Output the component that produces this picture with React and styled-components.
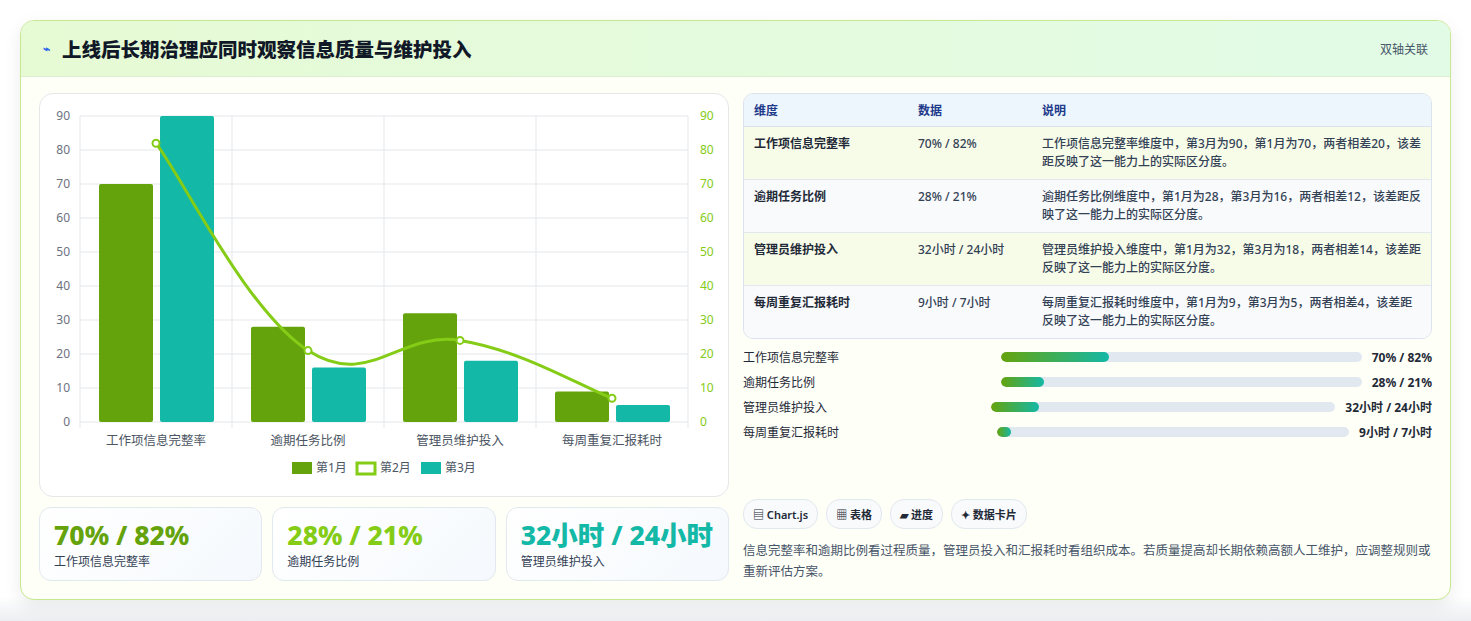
import React from 'react';
import styled, { createGlobalStyle } from 'styled-components';

const Global = createGlobalStyle`
  body { margin: 0; background: #f3f4f6; font-family: "Noto Sans", "Noto Sans CJK SC", sans-serif; }
`;

const Page = styled.div`
  padding: 20px 20px 20px 20px;
  height: 621px;
  box-sizing: border-box;
  background: linear-gradient(#fff, #fff 96%, #eceef1);
`;

const Panel = styled.div`
  border: 1px solid #c6e88f;
  border-radius: 14px;
  background: #fefff7;
  box-shadow: 0 6px 18px rgba(0,0,0,0.08);
  overflow: hidden;
  height: 580px;
  box-sizing: border-box;
`;

const Header = styled.div`
  height: 55px;
  display: flex;
  align-items: center;
  justify-content: space-between;
  padding: 0 22px;
  background: linear-gradient(90deg, #e6fad4, #e2fbe6);
  border-bottom: 1px solid #dbeed0;
`;

const Title = styled.h1`
  margin: 0;
  font-size: 19.5px;
  font-weight: 800;
  color: #111827;
  display: flex;
  align-items: center;
  gap: 12px;
`;

const HeaderTag = styled.span`
  font-size: 12px;
  color: #475569;
`;

const Body = styled.div`
  display: grid;
  grid-template-columns: 690px 1fr;
  gap: 14px;
  padding: 16px 18px 0 18px;
`;

const LeftCol = styled.div`
  display: flex;
  flex-direction: column;
  gap: 10px;
`;

const ChartBox = styled.div`
  height: 404px;
  border: 1px solid #e5e7eb;
  border-radius: 14px;
  background: #fff;
  box-sizing: border-box;
`;

const Cards = styled.div`
  display: grid;
  grid-template-columns: repeat(3, 1fr);
  gap: 10px;
`;

const Card = styled.div`
  height: 74px;
  box-sizing: border-box;
  border: 1px solid #e2e8f0;
  border-radius: 12px;
  background: linear-gradient(135deg, #fff, #f5f9fd);
  padding: 10px 14px;
`;

const CardValue = styled.div`
  font-size: 26.5px;
  font-weight: 800;
  color: ${p => p.color};
  line-height: 34px;
`;

const CardLabel = styled.div`
  font-size: 12px;
  color: #334155;
`;

const RightCol = styled.div`
  display: flex;
  flex-direction: column;
`;

const Table = styled.table`
  width: 100%;
  border-collapse: separate;
  border-spacing: 0;
  border: 1px solid #dbe3ee;
  border-radius: 10px;
  overflow: hidden;
  font-size: 12px;
`;

const Th = styled.th`
  text-align: left;
  font-weight: 700;
  color: #1e3a8a;
  background: #edf5fd;
  padding: 0 10px;
  height: 32px;
  border-bottom: 1px solid #dbe3ee;
  width: ${p => p.w || 'auto'};
`;

const Tr = styled.tr`
  background: ${p => (p.alt ? '#f8fafc' : '#f7fce9')};
  td { border-bottom: ${p => (p.last ? 'none' : '1px solid #e2e8f0')}; }
`;

const Td = styled.td`
  padding: 8px 10px;
  height: 36px;
  vertical-align: top;
  color: ${p => (p.strong ? '#1f2937' : '#334155')};
  font-weight: ${p => (p.strong ? 600 : 500)};
  line-height: 18px;
`;

const Bars = styled.div`
  display: flex;
  flex-direction: column;
  gap: 7px;
  margin-top: 9px;
`;

const BarRow = styled.div`
  display: flex;
  align-items: center;
  height: 18px;
  font-size: 12px;
  color: #1f2937;
`;

const BarLabel = styled.span`
  flex: 0 0 auto;
  width: ${p => p.w}px;
`;

const Track = styled.div`
  flex: 1;
  height: 10px;
  border-radius: 6px;
  background: #e2e8f0;
  margin-right: 10px;
  overflow: hidden;
`;

const Fill = styled.div`
  height: 100%;
  border-radius: 6px;
  background: linear-gradient(90deg, #65a30d, #14b8a6);
`;

const BarValue = styled.span`
  font-weight: 700;
  white-space: nowrap;
`;

const Chips = styled.div`
  display: flex;
  gap: 8px;
  margin-top: 58px;
`;

const Chip = styled.span`
  font-size: 11px;
  font-weight: 600;
  color: #1f2937;
  border: 1px solid #e2e8f0;
  background: #f8fafc;
  border-radius: 14px;
  padding: 6px 9px;
`;

const Note = styled.p`
  margin: 11px 0 0;
  font-size: 12.5px;
  color: #475569;
  line-height: 21px;
`;

const cats = ['工作项信息完整率', '逾期任务比例', '管理员维护投入', '每周重复汇报耗时'];
const m1 = [70, 28, 32, 9];
const m2 = [82, 21, 24, 7];
const m3 = [90, 16, 18, 5];

const Chart = () => {
  const x0 = 40, x1 = 648, y0 = 22, y1 = 328;
  const y = v => y1 - (v / 90) * (y1 - y0);
  const cw = (x1 - x0) / 4;
  const pts = m2.map((v, i) => [x0 + cw * i + cw / 2, y(v)]);
  const t = 0.4;
  let d = `M${pts[0][0]},${pts[0][1]}`;
  for (let i = 0; i < pts.length - 1; i++) {
    const p0 = pts[i - 1] || pts[i], p1 = pts[i], p2 = pts[i + 1], p3 = pts[i + 2] || p2;
    const c1 = [p1[0] + (p2[0] - p0[0]) * t / 2, p1[1] + (p2[1] - p0[1]) * t / 2];
    const c2 = [p2[0] - (p3[0] - p1[0]) * t / 2, p2[1] - (p3[1] - p1[1]) * t / 2];
    d += ` C${c1[0]},${c1[1]} ${c2[0]},${c2[1]} ${p2[0]},${p2[1]}`;
  }
  return (
    <svg width="688" height="402" style={{ display: 'block' }} fontFamily="Noto Sans, Noto Sans CJK SC, sans-serif">
      {[0, 10, 20, 30, 40, 50, 60, 70, 80, 90].map(v => (
        <g key={v}>
          <line x1={x0} x2={x1} y1={y(v)} y2={y(v)} stroke="#e5e7eb" />
          <text x={x0 - 10} y={y(v) + 4} fontSize="12" fill="#6b7280" textAnchor="end">{v}</text>
          <text x={x1 + 12} y={y(v) + 4} fontSize="12" fill="#84cc16">{v}</text>
        </g>
      ))}
      {[0, 1, 2, 3, 4].map(i => (
        <line key={i} x1={x0 + cw * i} x2={x0 + cw * i} y1={y0} y2={y1 + 6} stroke="#e5e7eb" />
      ))}
      {cats.map((c, i) => {
        const cx = x0 + cw * i;
        return (
          <g key={c}>
            <rect x={cx + 19} y={y(m1[i])} width="54" height={y1 - y(m1[i])} fill="#65a30d" rx="2" />
            <rect x={cx + 80} y={y(m3[i])} width="54" height={y1 - y(m3[i])} fill="#14b8a6" rx="2" />
            <text x={cx + cw / 2} y={y1 + 23} fontSize="12.5" fill="#4b5563" textAnchor="middle">{c}</text>
          </g>
        );
      })}
      <path d={d} fill="none" stroke="#84cc16" strokeWidth="3" />
      {pts.map(([px, py], i) => (
        <circle key={i} cx={px} cy={py} r="3.5" fill="#fff" stroke="#84cc16" strokeWidth="2" />
      ))}
      <g fontSize="12" fill="#4b5563">
        <rect x="252" y="368" width="20" height="12" fill="#65a30d" />
        <text x="276" y="378">第1月</text>
        <rect x="317" y="369" width="18" height="11" fill="#fff" stroke="#84cc16" strokeWidth="3" />
        <text x="340" y="378">第2月</text>
        <rect x="381" y="368" width="20" height="12" fill="#14b8a6" />
        <text x="405" y="378">第3月</text>
      </g>
    </svg>
  );
};

const rows = [
  ['工作项信息完整率', '70% / 82%', '工作项信息完整率维度中，第3月为90，第1月为70，两者相差20，该差距反映了这一能力上的实际区分度。'],
  ['逾期任务比例', '28% / 21%', '逾期任务比例维度中，第1月为28，第3月为16，两者相差12，该差距反映了这一能力上的实际区分度。'],
  ['管理员维护投入', '32小时 / 24小时', '管理员维护投入维度中，第1月为32，第3月为18，两者相差14，该差距反映了这一能力上的实际区分度。'],
  ['每周重复汇报耗时', '9小时 / 7小时', '每周重复汇报耗时维度中，第1月为9，第3月为5，两者相差4，该差距反映了这一能力上的实际区分度。'],
];

const bars = [
  ['工作项信息完整率', '70% / 82%', 30, 258],
  ['逾期任务比例', '28% / 21%', 12, 258],
  ['管理员维护投入', '32小时 / 24小时', 14, 248],
  ['每周重复汇报耗时', '9小时 / 7小时', 4, 254],
];

export default function App() {
  return (
    <Page>
      <Global />
      <Panel>
        <Header>
          <Title><span style={{ fontSize: 12, color: '#2563eb' }}>⌁</span>上线后长期治理应同时观察信息质量与维护投入</Title>
          <HeaderTag>双轴关联</HeaderTag>
        </Header>
        <Body>
          <LeftCol>
            <ChartBox><Chart /></ChartBox>
            <Cards>
              <Card><CardValue color="#65a30d">70% / 82%</CardValue><CardLabel>工作项信息完整率</CardLabel></Card>
              <Card><CardValue color="#84cc16">28% / 21%</CardValue><CardLabel>逾期任务比例</CardLabel></Card>
              <Card><CardValue color="#14b8a6">32小时 / 24小时</CardValue><CardLabel>管理员维护投入</CardLabel></Card>
            </Cards>
          </LeftCol>
          <RightCol>
            <Table>
              <thead>
                <tr><Th w="144px">维度</Th><Th w="104px">数据</Th><Th>说明</Th></tr>
              </thead>
              <tbody>
                {rows.map((r, i) => (
                  <Tr key={r[0]} alt={i % 2 === 1} last={i === rows.length - 1}>
                    <Td strong>{r[0]}</Td><Td>{r[1]}</Td><Td>{r[2]}</Td>
                  </Tr>
                ))}
              </tbody>
            </Table>
            <Bars>
              {bars.map(([l, v, p, w]) => (
                <BarRow key={l}>
                  <BarLabel w={w}>{l}</BarLabel>
                  <Track><Fill style={{ width: `${p}%` }} /></Track>
                  <BarValue>{v}</BarValue>
                </BarRow>
              ))}
            </Bars>
            <Chips>
              <Chip>▤ Chart.js</Chip>
              <Chip>▦ 表格</Chip>
              <Chip>▰ 进度</Chip>
              <Chip>✦ 数据卡片</Chip>
            </Chips>
            <Note>信息完整率和逾期比例看过程质量，管理员投入和汇报耗时看组织成本。若质量提高却长期依赖高额人工维护，应调整规则或重新评估方案。</Note>
          </RightCol>
        </Body>
      </Panel>
    </Page>
  );
}
